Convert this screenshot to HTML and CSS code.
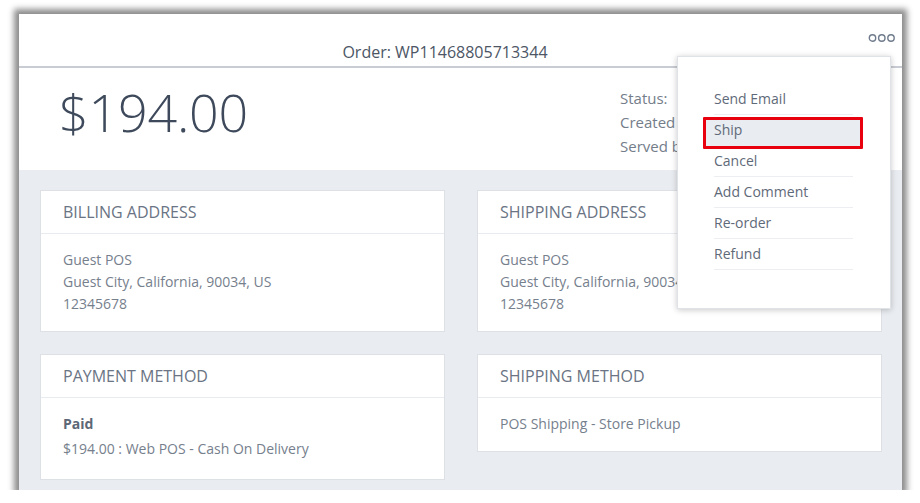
FILE: index.html
```html
<!DOCTYPE html>
<html lang="en">
<head>
<meta charset="utf-8">
<title>Order WP11468805713344</title>
<link rel="stylesheet" href="styles.css">
</head>
<body>
<div class="frame">
  <header class="topbar">
    <h1 class="order-title">Order: WP11468805713344</h1>
    <button class="more" aria-label="More actions">
      <svg width="28" height="10" viewBox="0 0 28 10" aria-hidden="true">
        <circle cx="4.5" cy="5" r="3.2" fill="none" stroke="#6f7b8c" stroke-width="1.4"/>
        <circle cx="13.8" cy="5" r="3.2" fill="none" stroke="#6f7b8c" stroke-width="1.4"/>
        <circle cx="23" cy="5" r="3.2" fill="none" stroke="#6f7b8c" stroke-width="1.4"/>
      </svg>
    </button>
    <div class="menu">
      <ul class="menu-list">
        <li class="menu-item">Send Email</li>
        <li class="menu-item active">Ship</li>
        <li class="menu-item">Cancel</li>
        <li class="menu-item">Add Comment</li>
        <li class="menu-item">Re-order</li>
        <li class="menu-item">Refund</li>
      </ul>
    </div>
  </header>

  <section class="summary">
    <div class="amount">$194.00</div>
    <div class="meta">
      <div>Status:</div>
      <div>Created at:</div>
      <div>Served by:</div>
    </div>
  </section>

  <main class="details">
    <div class="card">
      <div class="card-head">BILLING ADDRESS</div>
      <div class="card-body">
        <div>Guest POS</div>
        <div>Guest City, California, 90034, US</div>
        <div>12345678</div>
      </div>
    </div>
    <div class="card">
      <div class="card-head">SHIPPING ADDRESS</div>
      <div class="card-body">
        <div>Guest POS</div>
        <div>Guest City, California, 90034, US</div>
        <div>12345678</div>
      </div>
    </div>
    <div class="card">
      <div class="card-head">PAYMENT METHOD</div>
      <div class="card-body payment">
        <div class="paid">Paid</div>
        <div>$194.00 : Web POS - Cash On Delivery</div>
      </div>
    </div>
    <div class="card">
      <div class="card-head">SHIPPING METHOD</div>
      <div class="card-body">
        <div>POS Shipping - Store Pickup</div>
      </div>
    </div>
  </main>
</div>
</body>
</html>
```

FILE: styles.css
```css
* { box-sizing: border-box; }

html, body {
  margin: 0;
  background: #ffffff;
}

body {
  padding: 14px 18px 0 19px;
  font-family: "Open Sans", "Liberation Sans", sans-serif;
  color: #737c89;
}

.frame {
  position: relative;
  width: 883px;
  height: 476px;
  background: #e9ecf0;
  box-shadow: 0 0 6px 5px rgba(0, 0, 0, 0.45);
  overflow: hidden;
}

/* top bar */
.topbar {
  display: flex;
  height: 54px;
  background: #fff;
  border-bottom: 2px solid #c9cdd3;
  padding-right: 6px;
}

.order-title {
  flex: 1;
  margin: 0;
  padding: 27px 0 0 3px;
  text-align: center;
  font-size: 16px;
  line-height: 22px;
  font-weight: 400;
  color: #4c5665;
}

.more {
  align-self: flex-start;
  margin-top: 19px;
  width: 28px;
  height: 10px;
  padding: 0;
  border: 0;
  background: none;
  display: flex;
}

/* dropdown menu */
.menu {
  position: absolute;
  left: 658px;
  top: 42px;
  width: 214px;
  height: 253px;
  background: #fff;
  border: 1px solid #dfe2e6;
  box-shadow: 0 1px 6px rgba(0, 0, 0, 0.22);
  z-index: 5;
}

.menu-list {
  position: relative;
  z-index: 0;
  list-style: none;
  margin: 0;
  padding: 27px 37px 0 36px;
}

.menu-item {
  position: relative;
  height: 31px;
  line-height: 30px;
  font-size: 14px;
  color: #5f6a79;
  border-bottom: 1px solid #eceef2;
}

.menu-item.active {
  z-index: 1;
  border-bottom-color: transparent;
}

.menu-item.active::before {
  content: "";
  position: absolute;
  left: -11px;
  right: -10px;
  top: 2px;
  bottom: -4px;
  background: #e9ecf0;
  border: 3px solid #e8000e;
  border-radius: 1px;
  z-index: -1;
}

/* summary */
.summary {
  display: flex;
  height: 102px;
  background: #fff;
}

.amount {
  width: 601px;
  padding: 14px 0 0 40px;
  font-size: 52px;
  line-height: 60px;
  font-weight: 300;
  color: #3e4a5b;
  letter-spacing: -0.2px;
}

.meta {
  padding-top: 18px;
  font-size: 15px;
  line-height: 24px;
  color: #747d8a;
}

/* cards */
.details {
  display: grid;
  grid-template-columns: 1fr 1fr;
  column-gap: 32px;
  row-gap: 22px;
  align-items: start;
  padding: 20px 20px 0 21px;
}

.card {
  background: #fff;
  border: 1px solid #dde1e6;
}

.card-head {
  height: 43px;
  line-height: 42px;
  padding-left: 22px;
  font-size: 16px;
  color: #6a7484;
  border-bottom: 1px solid #e8ebef;
}

.card-body {
  padding: 15px 22px 16px;
  font-size: 14px;
  line-height: 22px;
  color: #76808d;
}

.card-body.payment {
  padding-bottom: 19px;
}

.paid {
  font-weight: 700;
  color: #5d6776;
  margin-bottom: 3px;
}
```
